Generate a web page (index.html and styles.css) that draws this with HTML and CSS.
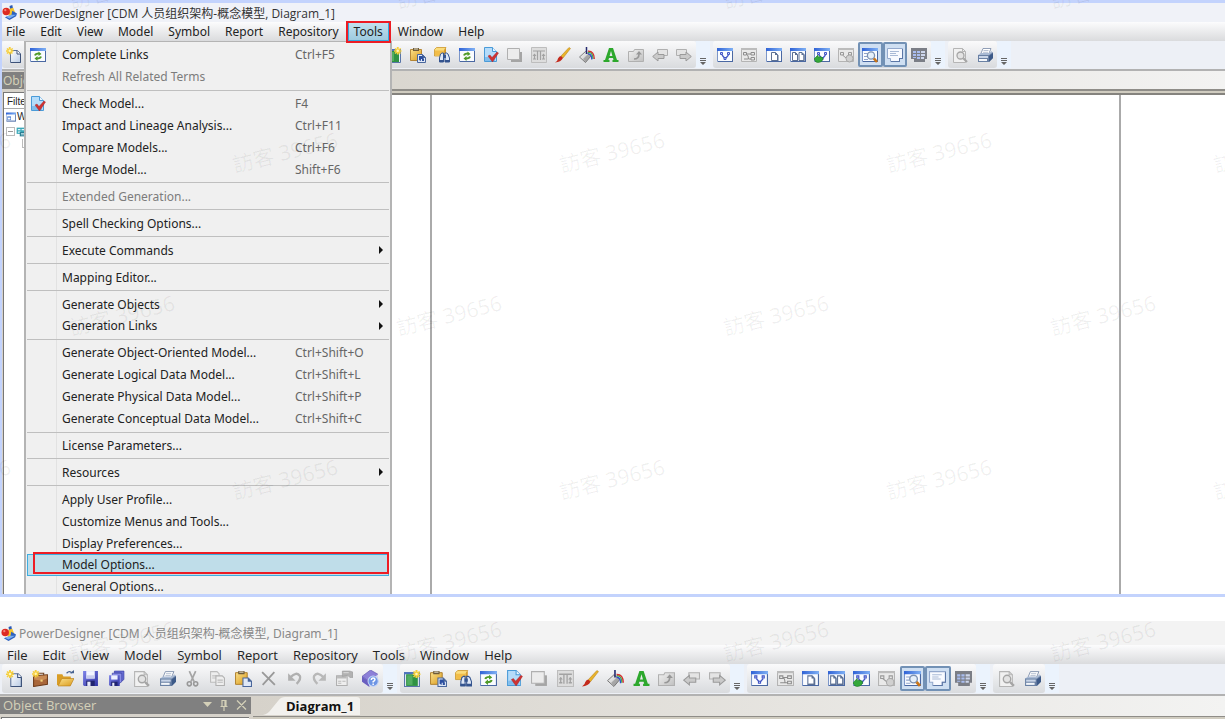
FILE: index.html
```html
<!DOCTYPE html>
<html lang="en">
<head>
<meta charset="utf-8">
<title>PowerDesigner</title>
<link rel="stylesheet" href="styles.css">
</head>
<body>
<svg class="defs" aria-hidden="true">
  <defs>
    <linearGradient id="g-bar" x1="0" x2="1"><stop offset="0" stop-color="#2f62d6"/><stop offset="1" stop-color="#7fb0f4"/></linearGradient>
    <linearGradient id="g-page" x1="0" x2="1" y2="1"><stop offset="0" stop-color="#fff"/><stop offset="1" stop-color="#b9cbe4"/></linearGradient>
    <linearGradient id="g-gray" x1="0" x2="1" y2="1"><stop offset="0" stop-color="#f2f2f2"/><stop offset="1" stop-color="#c0c0c0"/></linearGradient>
    <linearGradient id="g-gold" x1="0" x2="1" y2="1"><stop offset="0" stop-color="#fbe08a"/><stop offset="1" stop-color="#d99a1c"/></linearGradient>
    <linearGradient id="g-violet" x1="0" x2="1" y2="1"><stop offset="0" stop-color="#7f84e8"/><stop offset="1" stop-color="#3034a4"/></linearGradient>
    <symbol id="spark" viewBox="0 0 16 16"><path fill="#f6cf3c" d="M3 0h2v2l2-1 .6 1.200L6 3.500h2v1.500H6l1.500 1.500-1.200 1L5 6v2H3V6L1.500 7.500.5 6.500 2 5H0V3.500h2L.5 2l1-1L3 2z"/><circle cx="4" cy="4" r="1.300" fill="#fff6b8"/></symbol>
    <symbol id="win" viewBox="0 0 16 16"><path fill="#fafcff" stroke="#7c96c8" d="M.5 1.500h15v13H.5z"/><path fill="url(#g-bar)" d="M0 1h16v3H0z"/><path fill="#4a68a2" d="M15 4h1v11H1v-1h14z"/></symbol>
    <symbol id="wingray" viewBox="0 0 16 16"><path fill="#e9e9e9" stroke="#b4b4b4" d="M.5 1.500h15v13H.5z"/><path fill="#bcbcbc" d="M0 1h16v2H0z"/></symbol>
    <symbol id="i-app" viewBox="0 0 16 16"><path fill="#2b59b8" d="M8 1l3-1 1 5-3 1z"/><path fill="#f5c52b" d="M8 4l4-1 2 5-2 3-5 1z"/><path fill="#2d61c0" d="M11 6l5 3-1 3-7 4-5-3 7-2z"/><path fill="#79aef0" d="M4 12.500l6-2 5 0-7 4z"/><circle cx="4.500" cy="7" r="4" fill="#dd2a22"/><circle cx="3.500" cy="5.500" r="1.200" fill="#f2857c"/></symbol>
    <symbol id="i-new" viewBox="0 0 16 16"><path fill="url(#g-page)" stroke="#5c7195" d="M4.500 3.500h7l3 3v9h-10z"/><path fill="#fff" stroke="#3c5178" d="M11 3.500V7h3.500"/><path stroke="#3c5178" d="M14.500 7v8.500H5" fill="none"/><use href="#spark" width="15" height="15"/></symbol>
    <symbol id="i-case" viewBox="0 0 16 16"><path fill="#a9673a" stroke="#6e3b1a" d="M1.500 5.500l13-1v9l-13 2z"/><path fill="#c98b55" d="M2 6l12-1v3l-5 2-7-1z"/><path fill="none" stroke="#70401f" d="M6 5V3h5v2"/><path fill="#f1d27a" d="M8 9h2v2H8z"/><use href="#spark" width="14" height="14"/></symbol>
    <symbol id="i-open" viewBox="0 0 16 16"><path fill="#d99d25" d="M0 4h5l1 2h7v8H0z"/><path fill="url(#g-gold)" stroke="#b98018" stroke-width=".6" d="M1 15l3.500-7H16l-3.500 7z"/><path fill="none" stroke="#45618f" stroke-width="1.200" d="M9 3q3-3 5 0"/><path fill="#45618f" d="M12 3h4V0z"/></symbol>
    <symbol id="i-save" viewBox="0 0 16 16"><path fill="url(#g-violet)" d="M1 1h14v14H2l-1-1z"/><path fill="#f3f5ff" d="M4 1h8v7H4z"/><path fill="#c8cdee" d="M4 5h8v3H4z"/><path fill="#20246e" d="M4 10h8v5H4z"/><path fill="#e8eafa" d="M5 11h3v4H5z"/></symbol>
    <symbol id="i-saveall" viewBox="0 0 16 16"><path fill="#6a6fd4" stroke="#3438a0" stroke-width=".6" d="M6 1l9 0v8l-3 2V3H6z"/><path fill="#8a8ee6" stroke="#3438a0" stroke-width=".6" d="M4 3l9 0v8l-3 2H4z"/><path fill="url(#g-violet)" d="M1 5h10v10H2l-1-1z"/><path fill="#eef0ff" d="M3 5h6v4H3z"/><path fill="#20246e" d="M3 11h6v4H3z"/><path fill="#e8eafa" d="M4 12h2v3H4z"/></symbol>
    <symbol id="i-preview" viewBox="0 0 16 16"><path fill="#f1f1f1" stroke="#b5b5b5" d="M1.500 1.500h9l3 3v11h-12z"/><path fill="none" stroke="#b5b5b5" d="M10.500 1.500v3h3"/><circle cx="8.500" cy="8.500" r="3.500" fill="#e3e3e3" stroke="#a5a5a5" stroke-width="1.300"/><path stroke="#a5a5a5" stroke-width="2.200" d="M11.300 11.300l3.700 3.700"/></symbol>
    <symbol id="i-print" viewBox="0 0 16 16"><path fill="#fff" stroke="#7688a6" stroke-width=".8" d="M6 1.500l8 0-2.500 6H3.500z"/><path stroke="#a6b3c8" stroke-width=".8" d="M6.500 3.500h5M6 5.300h5"/><path fill="#a9bad4" d="M1 8l3-2h8l3-2v2l-3 3H1z"/><path fill="#6a81a4" d="M1 8h11l4-3v6l-4 4H1z"/><path fill="#c9d5e8" d="M2 9h9v2H2z"/><path fill="#3d5a88" d="M12 9l4-3v5l-4 4z"/><path fill="#f4f7fb" d="M2 12h8v2H2z"/></symbol>
    <symbol id="i-cut" viewBox="0 0 16 16"><path fill="none" stroke="#a5a5a5" stroke-width="1.600" d="M5 1l4.500 10M11 1L6.500 11"/><circle cx="5" cy="13" r="1.900" fill="none" stroke="#989898" stroke-width="1.500"/><circle cx="11" cy="13" r="1.900" fill="none" stroke="#989898" stroke-width="1.500"/></symbol>
    <symbol id="i-copy" viewBox="0 0 16 16"><path fill="#eee" stroke="#bcbcbc" d="M1.500 1.500h6l2 2v8h-8z"/><path stroke="#c0c0c0" d="M3 5.500h5M3 7.500h5"/><path fill="#eee" stroke="#b0b0b0" d="M6.500 5.500h6l2 2v7h-8z"/><path stroke="#bbb" d="M8 9.500h5M8 11.500h5"/></symbol>
    <symbol id="i-paste" viewBox="0 0 16 16"><path fill="url(#g-gold)" stroke="#a8741a" stroke-width=".8" d="M.5 2.500h11v11H.5z"/><path fill="#6d5b3a" d="M3 1h6v3H3z"/><path fill="#e8e2cc" d="M4 1.500h4v1H4z"/><path fill="#dfe8f6" stroke="#4a679c" d="M7.500 7.500h5l3 3v5h-8z"/><path fill="#466399" d="M12 7v4h4z"/></symbol>
    <symbol id="i-del" viewBox="0 0 16 16"><path stroke="#999" stroke-width="1.700" fill="none" d="M2 2l12 12M13.500 2L2.500 14"/></symbol>
    <symbol id="i-undo" viewBox="0 0 16 16"><path fill="none" stroke="#b0b0b0" stroke-width="2.200" d="M4 7q6-6 9-1.500 1.500 3-3 7.500"/><path fill="#b0b0b0" d="M2 3v7h7z"/></symbol>
    <symbol id="i-redo" viewBox="0 0 16 16"><path fill="none" stroke="#b8b8b8" stroke-width="2.200" d="M12 7Q6 1 3 5.500 1.500 8.500 6 13"/><path fill="#b8b8b8" d="M14 3v7H7z"/></symbol>
    <symbol id="i-props" viewBox="0 0 16 16"><path fill="#eee" stroke="#b0b0b0" d="M.5 5.500h10v9H.5z"/><path fill="#bbb" d="M1 5h9v3H1zM2 10h3v1H2zM6 10h3v1H6zM2 12h3v1H2z"/><path fill="#b2b2b2" stroke="#9d9d9d" stroke-width=".6" d="M6 1h7l3 1v5h-3L11 5 6 6z"/><path fill="#d9d9d9" d="M7 2h5v1H7z"/></symbol>
    <symbol id="i-help" viewBox="0 0 16 16"><path fill="#8c80d8" stroke="#5e52ac" stroke-width=".6" d="M0 6l8-6 7 4-8 7z"/><path fill="#6a5fc0" d="M0 6l7 5v5l-7-5z"/><path fill="#d8d6ee" d="M7 11l8-7v4l-8 7z"/><circle cx="10.500" cy="10.500" r="4.800" fill="#6d95e4" stroke="#c3d4f6"/><path fill="none" stroke="#fff" stroke-width="1.400" d="M8.800 9.300q0-1.800 1.700-1.800t1.700 1.500q0 1-1.700 2v.8M10.500 12.800v1.200"/></symbol>
    <symbol id="i-green" viewBox="0 0 16 16"><path fill="#e9eef8" stroke="#5875a8" d="M.5 2.500h14v13H.5z"/><path fill="#4d74bc" d="M0 2h15v2H0z"/><path fill="#2f9243" d="M2 4h11v11H2z"/><path fill="#6cc276" d="M3 5h5v9H3z" opacity=".6"/><g transform="translate(8 0)"><use href="#spark" width="15" height="15"/></g></symbol>
    <symbol id="i-pasteref" viewBox="0 0 16 16"><use href="#i-paste" width="16" height="16"/><path fill="#2c4f9f" d="M9 13V9h3l2 3v2h-2v-2h-1v2z"/></symbol>
    <symbol id="i-find" viewBox="0 0 16 16"><path fill="#fbdd7c" stroke="#c68d1a" stroke-width=".7" d="M.5 2.500l2-2H12l-1.500 2.500v6H.5z"/><path fill="#f2bd48" d="M1 3.500h9v5H1z"/><path fill="#d8961e" d="M10.500 3L12 1v6l-1.500 2z"/><path fill="#dfe8f6" stroke="#34548f" d="M6.500 7l1.500-1h1.500V15H5.500v-4zM11 6h1.500L14 7l1.500 4v4H11z"/><path fill="#34548f" d="M9 8h3v3H9zM5 13h5v2H5zM11 13h5v2h-5z"/></symbol>
    <symbol id="i-links" viewBox="0 0 16 16"><use href="#win" width="16" height="16"/><path fill="none" stroke="#4f9a28" stroke-width="1.800" d="M5 8.500q.5-2 4-2M11 9.500q-.5 2-4 2"/><path fill="#4f9a28" d="M8.500 4.500l3 2.500-3 2zM7.500 9l-3 2.500 3 2.500z"/></symbol>
    <symbol id="i-check" viewBox="0 0 16 16"><path fill="#b5dcfa" stroke="#4a9bd8" d="M1.500.5h8l4 4v10h-12z"/><path fill="#eaf6ff" stroke="#4a9bd8" d="M9.500.5v4h4"/><path fill="#81bdec" d="M2 10h10v4H2z"/><path fill="#cf3333" stroke="#a02020" stroke-width=".4" d="M5 9l2-1 2 2.500L14 5l1.500 1-6 9z"/></symbol>
    <symbol id="i-shadow" viewBox="0 0 16 16"><path fill="#a5a5a5" d="M4 5h11v10H4z"/><path fill="#ececec" stroke="#b0b0b0" d="M.5 1.500h12v11H.5z"/></symbol>
    <symbol id="i-text" viewBox="0 0 16 16"><path fill="#ddd" stroke="#bdbdbd" d="M.5.500h15v15H.5z"/><path fill="none" stroke="#a2a2a2" stroke-width="1.200" d="M2 4h12M6.500 4v9M9.500 4v9M2 12h3M11 12h3M3.500 7v5M12.500 7v5"/><path fill="#a2a2a2" d="M1.500 9h4l-2-2.500zM10.500 9h4l-2-2.500z"/></symbol>
    <symbol id="i-brush" viewBox="0 0 16 16"><path fill="#e9b32a" stroke="#b27e14" stroke-width=".5" d="M14 .5l1.500 1L8 11l-2-2z"/><path fill="#c42a1c" d="M6 9l2 2q-2 4-8 4.500 3-2 3-4 1-2.500 3-2.500z"/></symbol>
    <symbol id="i-fill" viewBox="0 0 16 16"><path fill="url(#g-gray)" stroke="#666" stroke-width=".8" d="M.5 10l6-5.500 5.500 4.500-5.500 6.500z"/><path fill="#777" d="M4 12l6-6 2 3-5.500 6z" opacity=".5"/><path stroke="#24286e" stroke-width="1.500" d="M7.500 0v7"/><path fill="none" stroke="#3bb34a" stroke-width="1.300" d="M9 5.500q5-.5 5 6.500"/><path fill="none" stroke="#d42b2b" stroke-width="1.300" d="M9 4.200Q15.300 4 15.300 12"/><path fill="none" stroke="#2d4ed0" stroke-width="1.300" d="M9 6.800q3.800-.3 3.800 5.700"/></symbol>
    <symbol id="i-font" viewBox="0 0 16 16"><path fill="#2da82d" fill-rule="evenodd" d="M6 1h4l4 12h1.500v2h-6v-2h1L10 11H6l-.6 2h1.100v2H.5v-2H2zM8 4L6.600 9h2.800z"/></symbol>
    <symbol id="i-folderup" viewBox="0 0 16 16"><path fill="url(#g-gray)" stroke="#b0b0b0" d="M.5 4.500h5l1-2h9v12H.5z"/><path fill="none" stroke="#979797" stroke-width="1.600" d="M6 12q5 0 5-5"/><path fill="#979797" d="M8 7.500h6L11 4z"/></symbol>
    <symbol id="i-back" viewBox="0 0 16 16"><path fill="#e4e4e4" stroke="#b0b0b0" d="M5.500 2.500h10v6h-10z"/><path fill="#cacaca" stroke="#9a9a9a" d="M.7 9.500L6 5v2.500h6v4H6V14z"/></symbol>
    <symbol id="i-fwd" viewBox="0 0 16 16"><path fill="#e4e4e4" stroke="#b0b0b0" d="M.5 2.500h10v6H.5z"/><path fill="#cacaca" stroke="#9a9a9a" d="M15.300 9.500L10 5v2.500H4v4h6V14z"/></symbol>
    <symbol id="i-dia" viewBox="0 0 16 16"><use href="#win" width="16" height="16"/><path fill="#c9d2f6" stroke="#4356c4" d="M3.500 5.500h2v2h-2zM10.500 5.500h2v2h-2zM7 10.500h2v2H7z"/><path fill="none" stroke="#4356c4" stroke-width="1.200" d="M5 8l2.500 3M11.500 8L9 11"/></symbol>
    <symbol id="i-diagray" viewBox="0 0 16 16"><use href="#wingray" width="16" height="16"/><path fill="none" stroke="#8c8c8c" d="M2.500 5.500h3v2.500h-3zM10 5.500h3.500v2.500H10zM10 10.500h3.500V13H10zM5.500 7H10M5.500 7.500q2 0 2 4.500H10M3 12h4"/></symbol>
    <symbol id="i-page" viewBox="0 0 16 16"><use href="#win" width="16" height="16"/><path fill="#fff" stroke="#5d7194" d="M5.500 5.500h4l2 2v6h-6z"/><path fill="#5d7194" d="M9 5v3h3zM11 8h1.500v6H6v-1h5z"/></symbol>
    <symbol id="i-pages" viewBox="0 0 16 16"><use href="#win" width="16" height="16"/><path fill="#fff" stroke="#5d7194" d="M2.500 5.500h3l2 2v6h-5zM9 5.500h3l2 2v6H9z"/><path fill="#5d7194" d="M5 5v3h3zM11.500 5v3h3zM7 8h1v6H3v-1h4zM13.500 8h1v6H10v-1h3.500z"/></symbol>
    <symbol id="i-dianew" viewBox="0 0 16 16"><use href="#i-dia" width="16" height="16"/><path fill="#33a83a" stroke="#1c7a22" stroke-width=".6" d="M0 12l4-4v2q3-1 5 1 0 4-5 4.500L2 15z"/></symbol>
    <symbol id="i-diaoff" viewBox="0 0 16 16"><use href="#wingray" width="16" height="16"/><path fill="none" stroke="#999" d="M2.500 5.500h3v2.500h-3zM10.500 5.500h3v2.500h-3zM4.500 8l3.500 3L12 8"/><circle cx="11.500" cy="11.500" r="3.500" fill="#d0d0d0" stroke="#a8a8a8"/></symbol>
    <symbol id="i-zoomwin" viewBox="0 0 16 16"><use href="#win" width="16" height="16"/><path stroke="#8fa3cb" d="M2 6.500h4M2 9.500h3M2 12.500h4"/><circle cx="9" cy="8.500" r="3.600" fill="#e6f0fa" stroke="#7d92b2" stroke-width="1.300"/><path stroke="#c87418" stroke-width="2.600" d="M11.800 11.300L15 15"/></symbol>
    <symbol id="i-note" viewBox="0 0 16 16"><path fill="#f8faff" stroke="#93a8cc" d="M.5 1.500h15v10h-3v3h-9v-3h-3z"/><path fill="#5c77a6" d="M15 2h1v10h-3v3H4v-1h8v-3h3z"/><path stroke="#a9bad6" d="M3 4.500h9M3 6.500h6M3 8.500h8"/></symbol>
    <symbol id="i-grid" viewBox="0 0 16 16"><path fill="#7b7e86" d="M0 1h16v11h-2v3H3v-3H0z"/><path fill="#a9bdf0" d="M2 4h3v2H2zM6 4h3v2H6zM2 7h3v2H2zM6 7h3v2H6zM2 10h3v1H2zM6 10h3v2H6z"/><path fill="#cdd6ec" d="M10 4h4v2h-4zM10 7h4v2h-4zM10 10h3v2h-3z"/></symbol>
    <symbol id="i-ws" viewBox="0 0 16 16"><use href="#win" width="16" height="16"/><path fill="#4e7ed0" d="M2 7h6v6H2z"/><path fill="#fff" d="M3 9h4v3H3z"/></symbol>
    <symbol id="i-model" viewBox="0 0 16 16"><path fill="#3aa8b8" d="M1 1h14v10H1z"/><path fill="#dff6fa" d="M3 3h4v2H3zM9 3h4v2H9zM3 7h4v2H3z"/><path fill="#2c7f94" d="M6 8h10v7H6z"/><path fill="#cdeff4" d="M8 10h6v1H8zM8 12h6v1H8z"/></symbol>
  </defs>
</svg>

<main class="page">
  <section class="window framed">
    <header class="title"><svg><use href="#i-app"/></svg><span>PowerDesigner [CDM 人员组织架构-概念模型, Diagram_1]</span></header>
    <nav class="menubar">
      <button>File</button><button>Edit</button><button>View</button><button>Model</button><button>Symbol</button><button>Report</button><button>Repository</button><button class="open">Tools</button><button>Window</button><button>Help</button>
    </nav>
    <div class="body">
      <div class="toolbar" data-toolbar></div>
      <div class="work">
        <aside class="browser">
          <h2>Object Browser</h2>
          <div class="tree">
            <div class="filter">Filter</div>
            <div class="node"><svg><use href="#i-ws"/></svg>Workspace</div>
            <div class="node"><i class="knob"></i><svg><use href="#i-model"/></svg></div>
            <div class="branch"></div>
          </div>
        </aside>
        <div class="editor"><div class="tabs"></div><div class="canvas"><div class="sheet"></div></div></div>
      </div>
      <ul class="menu">
        <li><button><svg><use href="#i-links"/></svg><span>Complete Links</span><kbd>Ctrl+F5</kbd></button></li>
        <li><button disabled><span>Refresh All Related Terms</span></button></li>
        <li class="sep"></li>
        <li><button><svg><use href="#i-check"/></svg><span>Check Model...</span><kbd>F4</kbd></button></li>
        <li><button><span>Impact and Lineage Analysis...</span><kbd>Ctrl+F11</kbd></button></li>
        <li><button><span>Compare Models...</span><kbd>Ctrl+F6</kbd></button></li>
        <li><button><span>Merge Model...</span><kbd>Shift+F6</kbd></button></li>
        <li class="sep"></li>
        <li><button disabled><span>Extended Generation...</span></button></li>
        <li class="sep"></li>
        <li><button><span>Spell Checking Options...</span></button></li>
        <li class="sep"></li>
        <li><button class="sub"><span>Execute Commands</span></button></li>
        <li class="sep"></li>
        <li><button><span>Mapping Editor...</span></button></li>
        <li class="sep"></li>
        <li><button class="sub"><span>Generate Objects</span></button></li>
        <li><button class="sub"><span>Generation Links</span></button></li>
        <li class="sep"></li>
        <li><button><span>Generate Object-Oriented Model...</span><kbd>Ctrl+Shift+O</kbd></button></li>
        <li><button><span>Generate Logical Data Model...</span><kbd>Ctrl+Shift+L</kbd></button></li>
        <li><button><span>Generate Physical Data Model...</span><kbd>Ctrl+Shift+P</kbd></button></li>
        <li><button><span>Generate Conceptual Data Model...</span><kbd>Ctrl+Shift+C</kbd></button></li>
        <li class="sep"></li>
        <li><button><span>License Parameters...</span></button></li>
        <li class="sep"></li>
        <li><button class="sub"><span>Resources</span></button></li>
        <li class="sep"></li>
        <li><button><span>Apply User Profile...</span></button></li>
        <li><button><span>Customize Menus and Tools...</span></button></li>
        <li><button><span>Display Preferences...</span></button></li>
        <li class="current"><button><span>Model Options...</span></button></li>
        <li><button><span>General Options...</span></button></li>
      </ul>
    </div>
  </section>

  <section class="window second">
    <header class="title"><svg><use href="#i-app"/></svg><span>PowerDesigner [CDM 人员组织架构-概念模型, Diagram_1]</span></header>
    <nav class="menubar">
      <button>File</button><button>Edit</button><button>View</button><button>Model</button><button>Symbol</button><button>Report</button><button>Repository</button><button>Tools</button><button>Window</button><button>Help</button>
    </nav>
    <div class="body">
      <div class="toolbar" data-toolbar></div>
      <div class="work">
        <aside class="browser">
          <h2>Object Browser
            <span class="tools"><svg viewBox="0 0 48 12"><path d="M2 3h9L6.500 8z" fill="currentColor"/><path fill="none" stroke="currentColor" stroke-width="1.200" d="M19.500 7.500h7M21 7V1.500h4V7M24 2v5M23 8v4M36 1.500l9 9M45 1.500l-9 9"/></svg></span>
          </h2>
          <div class="tree"></div>
        </aside>
        <div class="editor">
          <div class="tabs"><button class="tab"><svg viewBox="0 0 92 18" preserveAspectRatio="none"><path d="M0 18Q5 17 8 12L15 3Q17 0 21 0H89Q92 0 92 3V18z"/></svg><span>Diagram_1</span></button></div>
          <div class="canvas"></div>
        </div>
      </div>
    </div>
  </section>
  <svg class="marks" aria-hidden="true" data-marks></svg>
</main>
<script src="app.js"></script>
</body>
</html>
```
FILE: app.js
```js
const groups = [
  ["new", "case", "open", "save", "saveall", "preview", "print", "cut", "copy", "paste", "del", "undo", "redo", "props", "help"],
  ["green", "pasteref", "find", "links", "check", "shadow", "text", "brush", "fill", "font", "folderup", "back", "fwd"],
  ["dia", "diagray", "page", "pages", "dianew", "diaoff", "zoomwin", "note", "grid"],
  ["preview", "print"]
];
const pressed = ["zoomwin", "note"];

document.querySelectorAll("[data-toolbar]").forEach(bar => {
  bar.innerHTML = groups.map((names, i) =>
    `<div class="group g${i + 1}">` +
    names.map(n => `<button aria-label="${n}"${pressed.includes(n) ? ' class="pressed"' : ""}><svg><use href="#i-${n}"/></svg></button>`).join("") +
    `</div><button class="more" aria-label="more"><svg viewBox="0 0 6 7"><path d="M0 0h6v1H0zM0 2h6v1H0zM0 4h6L3 7z" fill="#666"/></svg></button>`
  ).join("");
});

// Visitor stamp, staggered over the whole page
const marks = [];
[-12, 152, 315, 479, 641].forEach((y, row) => {
  for (let x = row % 2 ? -42 : 122; x < 1400; x += 327) {
    marks.push(`<text transform="translate(${x} ${y}) rotate(-14)">訪客 39656</text>`);
  }
});
document.querySelector("[data-marks]").innerHTML = marks.join("");
```
FILE: styles.css
```css
* { box-sizing: border-box; }
body { margin: 0; background: #fff; font-family: "Noto Sans", "Noto Sans CJK SC", sans-serif; color: #222; }
button { font: inherit; color: inherit; background: none; border: 0; padding: 0; margin: 0; }
.defs { position: absolute; width: 0; height: 0; }
.page { position: relative; height: 100vh; overflow: hidden; display: flex; flex-direction: column; gap: 24px; }

.window { display: flex; flex-direction: column; font-size: 12px; }
.framed { border: solid #c3d3fd; border-width: 3px 0 3px 2px; flex: 0 0 597px; }
.second { flex: 1; min-height: 0; background: #f3f3f3; font-size: 13px; }

.title { display: flex; align-items: center; gap: 3px; height: 19px; flex: none; background: #f0f2f8; font-family: "Open Sans", "Noto Sans CJK SC", sans-serif; font-size: 12px; color: #333; white-space: nowrap; }
.title svg { width: 15px; height: 15px; }
.framed .title { gap: 2px; }
.second .title { height: 24px; background: #f3f3f3; color: #888; font-family: "Noto Sans", "Noto Sans CJK SC", sans-serif; padding-left: 1px; }

.menubar { display: flex; gap: 7px; height: 19px; flex: none; background: linear-gradient(#fcfcfd, #dadbdd); }
.menubar button { padding: 0 4px; line-height: 19px; position: relative; }
.menubar .open { padding: 0 6px; margin: 0 -2px; background: linear-gradient(#c4e2f0, #9cc9de); outline: 1px solid #35a8df; outline-offset: -1px; }
.menubar .open::after { content: ""; position: absolute; inset: -1px -2px -2px; border: 2px solid #ed1c24; z-index: 5; }
.second .menubar { padding-left: 3px; font-family: "Open Sans", sans-serif; }
.second .menubar button { line-height: 18px; }

.body { position: relative; flex: 1; min-height: 0; display: flex; flex-direction: column; overflow: hidden; }
.toolbar { display: flex; flex: none; height: 30px; background: #edf0f6; border-bottom: 2px solid #b2b2b2; }
.group { display: flex; align-items: center; background: linear-gradient(#fafafb, #d9dbde); border-radius: 3px; height: 27px; }
.group button { flex: 1; min-width: 0; height: 25px; display: grid; place-items: center; border-radius: 2px; }
.group svg { width: 16px; height: 16px; }
.group .pressed { background: #cfdff2; box-shadow: inset 0 0 0 2px #7291b5; }
.more { width: 14px; height: 27px; margin-right: 3px; display: flex; align-items: flex-end; justify-content: center; padding-bottom: 3px; background: #ebf3fd; }
.more svg { width: 6px; height: 7px; }
.g1 { width: 363px; }
.g2 { width: 314px; }
.g3 { width: 218px; }
.g4 { width: 49px; }
.second .toolbar { height: 32px; }
.second .group, .second .more { height: 29px; }
.second .group svg { width: 17px; height: 17px; }
.second .g1 { width: 381px; margin-left: 2px; }
.second .g2 { width: 330px; }
.second .g3 { width: 229px; }
.second .g4 { width: 52px; }

.work { flex: 1; min-height: 0; display: flex; background: #d6d2ca; }
.browser { width: 251px; flex: none; display: flex; flex-direction: column; padding-top: 1px; }
.browser h2 { margin: 0; height: 17px; flex: none; background: #808080; color: #d4d0b8; font-size: 12px; font-weight: 400; line-height: 17px; padding-left: 1px; display: flex; justify-content: space-between; }
.second .browser h2 { font-family: "Open Sans", sans-serif; font-size: 13px; padding-left: 3px; }
.tools svg { width: 48px; height: 12px; margin: 2px 2px 0 0; }
.tree { flex: 1; margin-top: 3px; border: solid #777; border-width: 1px 0 0 1px; background: #fff; margin-left: 1px; font-family: "Liberation Sans", sans-serif; font-size: 10px; }
.second .tree { margin-right: 2px; }
.filter { height: 16px; line-height: 18px; padding-left: 3px; border-bottom: 1px solid #aaa; }
.node { display: flex; align-items: center; height: 15px; padding-left: 2px; gap: 1px; }
.node svg { width: 10px; height: 10px; }
.knob { width: 9px; height: 9px; border: 1px solid #bbb; background: linear-gradient(#999, #999) center / 5px 1px no-repeat; }
.branch { width: 5px; height: 9px; margin-left: 18px; border: solid #bbb; border-width: 0 0 1px 1px; }
.editor { flex: 1; min-width: 0; display: flex; flex-direction: column; margin-left: 2px; }
.tabs { height: 18px; flex: none; background: linear-gradient(90deg, #d6d2ca, #f3f3f2); padding-left: 10px; }
.canvas { flex: 1; background: #fff; border-top: 2px solid #8f8d88; box-shadow: inset 0 2px #d0ccc0, inset 0 4px #85837e; padding-top: 4px; display: flex; }
.second .tabs { height: 20px; }
.second .canvas { border-top-width: 1px; }
.sheet { margin: 0 104px 0 175px; flex: 1; border: solid #aaa; border-width: 0 2px; }
.tab { position: relative; display: block; height: 18px; margin: 1px 0 0; padding: 0 6px 0 23px; line-height: 18px; font-family: "Open Sans", sans-serif; font-weight: 700; font-size: 13px; color: #111; }
.tab svg { position: absolute; inset: 0; width: 100%; height: 100%; fill: #f2f1ee; }
.tab span { position: relative; }

.menu { position: absolute; top: 0; bottom: -4px; left: 22px; width: 368px; margin: 0; padding: 2px 1px 0; list-style: none; display: flex; flex-direction: column; border: 2px solid #b4b4b4; border-width: 1px 2px 0; background: linear-gradient(90deg, transparent 30px, #e2e2e2 30px, #e2e2e2 31px, transparent 31px) #f0f0f0; }
.menu li { flex: 1 1 22px; min-height: 0; display: flex; }
.menu .sep { flex: 0 0 5px; align-items: center; }
.menu .sep::before { content: ""; width: 100%; height: 1px; background: #bfbfbf; }
.menu button { flex: 1; display: grid; grid-template-columns: 35px 233px 1fr; align-items: center; text-align: left; position: relative; white-space: nowrap; }
.menu button > svg { width: 16px; height: 16px; margin-left: 3px; grid-column: 1; }
.menu button > span { grid-column: 2; }
.menu kbd { grid-column: 3; font: inherit; color: #666; }
.menu button:disabled { color: #7c7c7c; }
.menu .sub::after { content: ""; position: absolute; right: 6px; border: 4px solid transparent; border-left-color: #111; border-right: 0; }
.menu .current button { background: #bfdde9; outline: 1px solid #3faee0; outline-offset: -1px; }
.menu .current button::after { content: ""; position: absolute; inset: -2px 0 2px 6px; border: 2px solid #ed1c24; }

.marks { position: absolute; inset: 0; width: 100%; height: 100%; pointer-events: none; z-index: 9; }
.marks text { font: 21px "Noto Sans", "Noto Sans CJK TC", sans-serif; fill: #000; fill-opacity: .06; text-anchor: middle; dominant-baseline: central; }
```
